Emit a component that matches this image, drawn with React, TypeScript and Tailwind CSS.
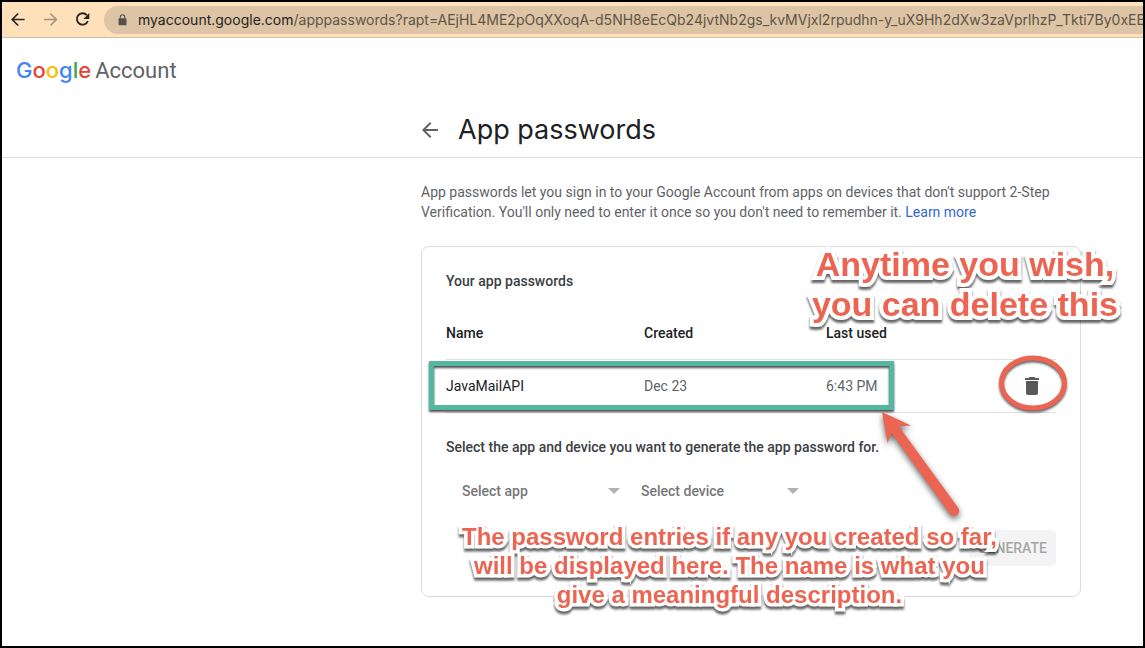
import type { ReactNode } from "react";

const passwords = [{ name: "JavaMailAPI", created: "Dec 23", lastUsed: "6:43 PM" }];

function Toolbar() {
  return (
    <div className="flex h-9 items-center overflow-hidden border-b border-[#d3c0a2] bg-[#fee0bb] pl-1.5">
      <button aria-label="Back" className="mr-3 flex size-5 shrink-0 items-center justify-center text-[#262522]">
        <svg viewBox="0 0 20 20" className="size-5" fill="none" stroke="currentColor" strokeWidth="1.7">
          <path d="M16.6 9.5H4.500M10.200 3.500L4.200 9.500l6 6" />
        </svg>
      </button>
      <button aria-label="Forward" className="mr-3 flex size-5 shrink-0 items-center justify-center text-[#a3917a]">
        <svg viewBox="0 0 20 20" className="size-5" fill="none" stroke="currentColor" strokeWidth="1.6">
          <path d="M4 9.500H16M10.400 3.500l6 6-6 6" />
        </svg>
      </button>
      <button aria-label="Reload" className="mr-3 flex size-5 shrink-0 items-center justify-center text-[#262522]">
        <svg viewBox="0 0 20 20" className="size-5" fill="none" stroke="currentColor" strokeWidth="1.8">
          <path d="M14.8 5.100A5.700 5.700 0 1 0 15.900 11" />
          <path d="M17.300 3v5.900h-5.900z" fill="currentColor" stroke="none" />
        </svg>
      </button>
      <div
        role="textbox"
        aria-label="Address"
        className="flex h-7 min-w-0 flex-1 items-center overflow-hidden rounded-l-full bg-[#dcc4a4] pl-3.5 font-['Inter',sans-serif] text-sm whitespace-nowrap text-[#5e5549]"
      >
        <svg viewBox="0 0 10 13" className="mr-2.5 h-3 w-2.5 shrink-0" fill="#54504c">
          <rect x="0.2" y="4.6" width="8.6" height="7.6" rx="0.9" />
          <path d="M2.1 5V3.200a2.400 2.400 0 0 1 4.800 0V5" fill="none" stroke="#54504c" strokeWidth="1.2" />
        </svg>
        <span className="text-[#262320]">myaccount.google.com</span>
        <span>/apppasswords?rapt=AEjHL4ME2pOqXXoqA-d5NH8eEcQb24jvtNb2gs_kvMVjxl2rpudhn-y_uX9Hh2dXw3zaVprlhzP_Tkti7By0xEE</span>
      </div>
    </div>
  );
}

function Logo() {
  return (
    <a href="#account" className="flex h-16 items-center gap-1 pt-px pl-3.5 text-[22px] text-[#5f6368]">
      <span className="font-['Inter',sans-serif] font-medium">
        <span className="text-[#4285f4]">G</span>
        <span className="text-[#ea4335]">o</span>
        <span className="text-[#fbbc05]">o</span>
        <span className="text-[#4285f4]">g</span>
        <span className="text-[#34a853]">l</span>
        <span className="text-[#ea4335]">e</span>
      </span>
      <span>Account</span>
    </a>
  );
}

function Dropdown({ label }: { label: string }) {
  return (
    <div className="relative w-[179px]">
      <select
        aria-label={label}
        className="h-10 w-full appearance-none bg-transparent pl-4 text-sm font-medium text-[#777]"
      >
        <option>{label}</option>
      </select>
      <svg viewBox="0 0 12 6" className="pointer-events-none absolute top-[17px] right-[5px] h-1.5 w-3" fill="#b0b0b0">
        <path d="M0 0h12L6 6z" />
      </svg>
    </div>
  );
}

function Callout({ className, children }: { className: string; children: ReactNode }) {
  return (
    <p
      className={`pointer-events-none absolute text-center font-['Liberation_Sans',Arial,sans-serif] font-bold whitespace-nowrap text-[#ec6553] [paint-order:stroke_fill] [filter:drop-shadow(0_3px_1px_rgba(0,0,0,0.6))] ${className}`}
    >
      {children}
    </p>
  );
}

export default function App() {
  return (
    <div className="min-h-screen overflow-hidden border-2 border-black bg-white font-['Roboto',sans-serif] text-sm text-[#5f6368]">
      <Toolbar />
      <header className="border-b border-[#dadce0]">
        <Logo />
        <div className="flex h-[55px] items-center gap-4 pl-4 sm:pl-104">
          <a href="#security" aria-label="Back to security" className="flex size-6 items-center justify-center text-[#5f6368]">
            <svg viewBox="0 0 24 24" className="size-6" fill="currentColor">
              <path d="M20 11H7.83l5.59-5.59L12 4l-8 8 8 8 1.41-1.41L7.83 13H20v-2z" />
            </svg>
          </a>
          <h1 className="font-['Inter',sans-serif] text-[27px] leading-9 text-[#202124]">App passwords</h1>
        </div>
      </header>
      <main className="pt-6 pr-15 pl-[419px]">
        <div className="max-w-[660px]">
          <p className="leading-5">
            App passwords let you sign in to your Google Account from apps on devices that don't support 2-Step
            <br />
            Verification. You'll only need to enter it once so you don't need to remember it.{" "}
            <a href="#learn" className="text-[#3367d6]">
              Learn more
            </a>
          </p>

          <section className="relative mt-6 rounded-lg border border-[#dadce0] px-6 pt-6 pb-[30px]">
            <h2 className="leading-5 font-medium text-[#3c4043]">Your app passwords</h2>
            <table className="mt-4 w-full table-fixed text-left">
              <thead>
                <tr className="h-13 border-b border-[#e0e0e0] text-[#202124]">
                  <th className="w-[198px] font-medium">Name</th>
                  <th className="w-[182px] font-medium">Created</th>
                  <th className="font-medium">Last used</th>
                  <th className="w-12" aria-label="Actions" />
                </tr>
              </thead>
              <tbody>
                {passwords.map((p) => (
                  <tr key={p.name} className="h-[53px] border-b border-[#e0e0e0]">
                    <td className="text-[#202124]">{p.name}</td>
                    <td>{p.created}</td>
                    <td>{p.lastUsed}</td>
                    <td>
                      <button aria-label="Delete password" className="flex w-full justify-center text-[#595959]">
                        <svg viewBox="0 0 24 24" className="size-6" fill="currentColor">
                          <path d="M6 19c0 1.1.9 2 2 2h8c1.1 0 2-.9 2-2V7H6v12zM19 4h-3.5l-1-1h-5l-1 1H5v2h14V4z" />
                        </svg>
                      </button>
                    </td>
                  </tr>
                ))}
              </tbody>
            </table>
            <p className="mt-6 leading-5 font-medium text-[#3c4043]">
              Select the app and device you want to generate the app password for.
            </p>
            <div className="mt-3.5 flex">
              <Dropdown label="Select app" />
              <Dropdown label="Select device" />
            </div>
            <div className="mt-[19px] flex justify-end">
              <button disabled className="h-9 w-[87px] rounded-sm bg-[#f4f4f4] font-medium text-[#a6a6a6]">
                GENERATE
              </button>
            </div>

            <div className="pointer-events-none absolute top-[114px] left-[7px] h-[49px] w-[465px] border-5 border-[#54b79f] [filter:drop-shadow(0_2px_1px_rgba(0,0,0,0.7))]" />
            <svg
              viewBox="0 0 72 62"
              className="pointer-events-none absolute top-[106px] right-[11px] h-[62px] w-[72px] [filter:drop-shadow(0_2px_1px_rgba(0,0,0,0.6))]"
              fill="none"
            >
              <ellipse cx="36" cy="30" rx="31.5" ry="25" stroke="#ec6553" strokeWidth="5" />
            </svg>
            <svg
              viewBox="0 0 84 110"
              className="pointer-events-none absolute top-[163px] left-[458px] h-[110px] w-[84px] [filter:drop-shadow(0_3px_3px_rgba(0,0,0,0.6))]"
              fill="#ec6553"
            >
              <path d="M2 2L31 15.5 19 16.5 78 97.5A5 5 0 0 1 70 104L11.500 23 7.500 33z" />
            </svg>
            <Callout className="-top-[3px] -right-[38px] text-[34px] leading-10 [-webkit-text-stroke:8px_white]">
              Anytime you wish,
              <br />
              you can delete this
            </Callout>
            <Callout className="top-[275px] left-[40px] text-2xl leading-[29px] [-webkit-text-stroke:7px_white]">
              The password entries if any you created so far,
              <br />
              will be displayed here. The name is what you
              <br />
              give a meaningful description.
            </Callout>
          </section>
        </div>
      </main>
    </div>
  );
}
